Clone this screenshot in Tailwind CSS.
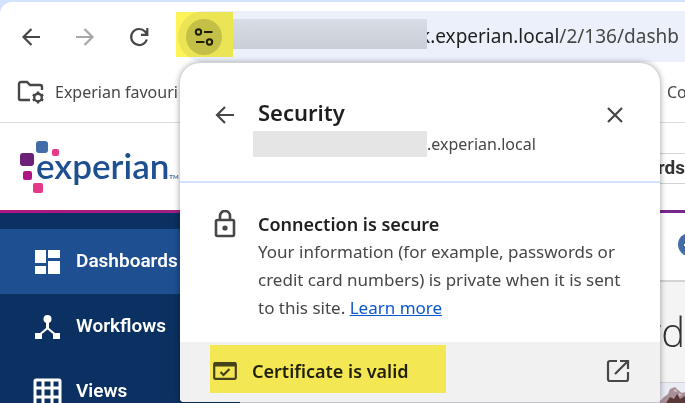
<!DOCTYPE html>
<html lang="en">
<head>
  <meta charset="UTF-8" />
  <meta name="viewport" content="width=device-width, initial-scale=1.0"/>
  <title>Experian - Security</title>
  <script src="https://cdn.jsdelivr.net/npm/@tailwindcss/browser@4"></script>
</head>
<body class="relative h-screen overflow-hidden bg-[#d3e3fd] font-['Noto_Sans','Open_Sans',sans-serif] text-[#474747]">
  <div class="flex h-full flex-col overflow-hidden pt-[2px]">

    <!-- Browser toolbar -->
    <div class="rounded-tl-xl bg-white pt-[9px]">
      <div class="flex h-[51px] items-center">
        <div class="flex w-[178px] shrink-0 items-center gap-[30px] pl-[19px]">
          <button aria-label="Back">
            <svg class="size-6" viewBox="0 0 24 24" fill="none" stroke="#474747" stroke-width="2.200"><path d="M21 12H4.500M12.500 4l-8 8 8 8"/></svg>
          </button>
          <button aria-label="Forward">
            <svg class="size-6" viewBox="0 0 24 24" fill="none" stroke="#a8a8a8" stroke-width="2.200"><path d="M3 12h16.500M11.500 4l8 8-8 8"/></svg>
          </button>
          <button aria-label="Reload">
            <svg class="size-6" viewBox="0 0 24 24" fill="none" stroke="#474747" stroke-width="2.200"><path d="M19.800 14.500A8 8 0 1 1 18 6.500L20 9M20.300 3v6.800H14"/></svg>
          </button>
        </div>
        <div class="flex h-full min-w-0 flex-1 items-center overflow-hidden rounded-l-full bg-[#ebf0fa] pl-2">
          <button aria-label="Site information" class="flex size-9 shrink-0 items-center justify-center rounded-full bg-[#c3c8cf]">
            <svg class="size-5" viewBox="0 0 20 20" fill="none" stroke="#1f1f1f" stroke-width="2"><circle cx="4.500" cy="5" r="2.700"/><path d="M10 5h8.500M2 15h8.500"/><circle cx="15.500" cy="15" r="2.700"/></svg>
          </button>
          <span class="relative z-10 mt-2 ml-[11px] h-[30px] w-[194px] shrink-0 self-start bg-linear-to-b from-[#d8dce5] to-[#c9cdd5]"></span>
          <span class="-ml-[7px] whitespace-nowrap text-[19px] text-[#1f1f1f]">k.experian.local<span class="text-[#474747]">/2/136/dashb</span></span>
        </div>
      </div>

      <!-- Bookmarks bar -->
      <div class="flex h-[61px] items-center justify-between border-b border-[#dedede] pl-[17px]">
        <a href="#" class="flex items-center gap-[10px] whitespace-nowrap">
          <svg class="h-6 w-7" viewBox="0 0 28 24" fill="none" stroke="#474747" stroke-width="2.400"><path d="M13 20H3.500A1.500 1.500 0 0 1 2 18.500V4a2 2 0 0 1 2-2h6l3 3h10a2 2 0 0 1 2 2v3"/><circle cx="21" cy="17.500" r="3.800"/><path d="M21 11.500v2M21 21.500v2M15.800 14.500l1.700 1M24.500 19.500l1.700 1M15.800 20.500l1.700-1M24.500 15.500l1.700-1"/></svg>
          Experian favouri
        </a>
        <a href="#" class="w-[18px] overflow-hidden">Co</a>
      </div>
    </div>

    <!-- App header -->
    <header class="flex h-[87px] shrink-0 items-center justify-between bg-white pl-5">
      <div class="flex">
        <svg class="h-[52px] w-10 shrink-0" viewBox="0 0 40 52"><rect x="16" width="12" height="12" rx="3" fill="#426da9"/><rect x="32" y="8" width="7" height="7" rx="2" fill="#e63888"/><rect y="12" width="14" height="13" rx="3" fill="#6d2077"/><rect x="3" y="30" width="9" height="9" rx="2" fill="#af1685"/><rect x="13" y="42" width="10" height="10" rx="2" fill="#e63888"/></svg>
        <span class="-ml-6 font-[Lato,sans-serif] text-[35px] leading-[48px] font-semibold text-[#1d4f91]">experian</span>
        <span class="mt-[32px] font-[Lato,sans-serif] text-[6px] leading-[8px] font-bold text-[#426da9]">TM</span>
      </div>
      <div class="mt-[3px] flex h-[31px] w-[40px] items-center justify-end border-y border-[#d4d4d4] font-[Roboto,sans-serif] text-[19px] font-bold text-[#333]">rds</div>
    </header>
    <div class="h-[3px] shrink-0 bg-linear-to-r from-[#af1685] to-[#77278b]"></div>

    <div class="flex min-h-0 flex-1">
      <!-- Side navigation -->
      <nav class="w-60 shrink-0 overflow-hidden bg-[#0a3161] pt-4 font-[Roboto,sans-serif] text-[19px] font-semibold text-white">
        <a href="#" class="flex h-[65px] items-center gap-4 bg-[#1d4f91] pl-[34px]">
          <svg class="size-[26px]" viewBox="0 0 26 26" fill="#fff"><path d="M1 1h11v13H1zM1 17h11v8H1zM14 1h12v8H14zM14 12h12v13H14z"/></svg>
          Dashboards
        </a>
        <a href="#" class="flex h-[65px] items-center gap-4 pl-[34px]">
          <svg class="size-[26px]" viewBox="0 0 26 26" fill="#fff"><circle cx="13.500" cy="5" r="4"/><path d="M12 8h3v6l6 5h5v6h-7v-5l-5.500-4.500L8 20v5H1v-6h5l6-5z"/></svg>
          Workflows
        </a>
        <a href="#" class="flex h-[65px] items-center gap-4 pl-[34px]">
          <svg class="size-[26px] overflow-visible" viewBox="0 0 26 26" fill="none" stroke="#fff" stroke-width="3"><rect x="1" y="1" width="25" height="25" rx="1"/><path d="M9 1v25M18 1v25M1 9h25M1 18h25"/></svg>
          Views
        </a>
      </nav>

      <!-- Page content -->
      <main class="flex min-w-0 flex-1 flex-col overflow-hidden bg-[#f4f4f4]">
        <div class="flex h-[69px] shrink-0 items-center justify-end border-b-2 border-[#d4d4d4] bg-white">
          <button aria-label="Add" class="-mr-4 mb-1 flex size-[23px] items-center justify-center rounded-full bg-[#426da9]">
            <svg class="size-3" viewBox="0 0 12 12" stroke="#fff" stroke-width="2"><path d="M0 6h12M6 0v12"/></svg>
          </button>
        </div>
        <h1 class="flex h-[101px] shrink-0 items-center justify-end border-b border-[#d4d4d4] font-['Open_Sans',sans-serif] text-[40px] font-light text-[#333]">rd</h1>
        <div class="flex min-h-0 flex-1 justify-end bg-[#e9ebf5]">
          <svg class="h-5 w-[25px]" viewBox="0 0 25 20"><path d="M0 18l4-4 4-3 2-5 5-2 3 3 4 3 3-1v11H0z" fill="#a98f97"/><path d="M6 20l4-6 4 2 3-5 3 5 5-3v7H6z" fill="#5a3838"/><path d="M13 8l3-2 1 3zM19 10l3 2-3 1z" fill="#d3c3c8"/></svg>
        </div>
      </main>
    </div>
  </div>

  <!-- Site security popup -->
  <section class="absolute top-[63px] right-[25px] left-[180px] overflow-hidden rounded-t-[20px] rounded-b-sm bg-white shadow-[0_0_6px_rgba(0,0,0,0.4)]">
    <div class="flex h-[120px] items-start border-b-2 border-[#d3e3fd] pt-[32px] pr-[35px] pl-[34px]">
      <button aria-label="Back" class="mt-[9px]">
        <svg class="size-[22px]" viewBox="0 0 22 22" fill="none" stroke="#474747" stroke-width="2.200"><path d="M20 11H3M11 3l-8 8 8 8"/></svg>
      </button>
      <div class="ml-[17px] flex-1">
        <h2 class="ml-[5px] text-[22px] leading-[34px] font-semibold text-[#1f1f1f]">Security</h2>
        <div class="mt-[2px] flex items-center">
          <span class="h-[26px] w-[174px] bg-[#e5e5e5]"></span>
          <span class="leading-6">.experian.local</span>
        </div>
      </div>
      <button aria-label="Close" class="mt-[10px]">
        <svg class="size-5" viewBox="0 0 20 20" fill="none" stroke="#474747" stroke-width="2.200"><path d="M3 3l14 14M17 3L3 17"/></svg>
      </button>
    </div>

    <div class="flex h-[159px] gap-5 pt-[27px] pl-[34px]">
      <svg class="h-7 w-6 shrink-0" viewBox="0 0 24 28" fill="none" stroke="#474747" stroke-width="2.600"><rect x="2" y="10" width="18" height="16" rx="1.500"/><path d="M6 10V6a5 5 0 0 1 10 0v4"/><circle cx="11" cy="18" r="1.300" fill="#474747"/></svg>
      <div>
        <h3 class="text-lg leading-[28px] font-semibold text-[#1f1f1f]">Connection is secure</h3>
        <p class="text-[17px] leading-[28px] whitespace-nowrap">Your information (for example, passwords or<br>credit card numbers) is private when it is sent<br>to this site. <a href="#" class="text-[#0b57d0] underline">Learn more</a></p>
      </div>
    </div>

    <a href="#" class="flex h-[60px] items-start justify-between bg-[#f1f1f1] pt-[3px] pr-[30px] pl-[30px]">
      <span class="flex h-12 w-[236px] items-center gap-[15px] bg-[#f3e853] pt-1 pl-[3px] text-lg font-semibold text-[#1f1f0b]">
        <svg class="h-[18px] w-6" viewBox="0 0 24 18" fill="none" stroke="#45421a" stroke-width="2.200"><rect x="1.200" y="1.200" width="21.600" height="15.600" rx="1"/><path d="M1 2.500h22" stroke-width="4"/><path d="M7.500 10l3 3 6-6"/></svg>
        Certificate is valid
      </span>
      <svg class="mt-[14px] size-6" viewBox="0 0 24 24" fill="none" stroke="#474747" stroke-width="2.200"><path d="M11 2H4a2 2 0 0 0-2 2v16a2 2 0 0 0 2 2h16a2 2 0 0 0 2-2v-7M14 2h8v8M22 2L9 15"/></svg>
    </a>
  </section>

  <!-- Highlighter over the site information button -->
  <div class="pointer-events-none absolute top-3 left-[176px] h-[45px] w-[57px] bg-[#fff457] mix-blend-multiply"></div>
</body>
</html>
